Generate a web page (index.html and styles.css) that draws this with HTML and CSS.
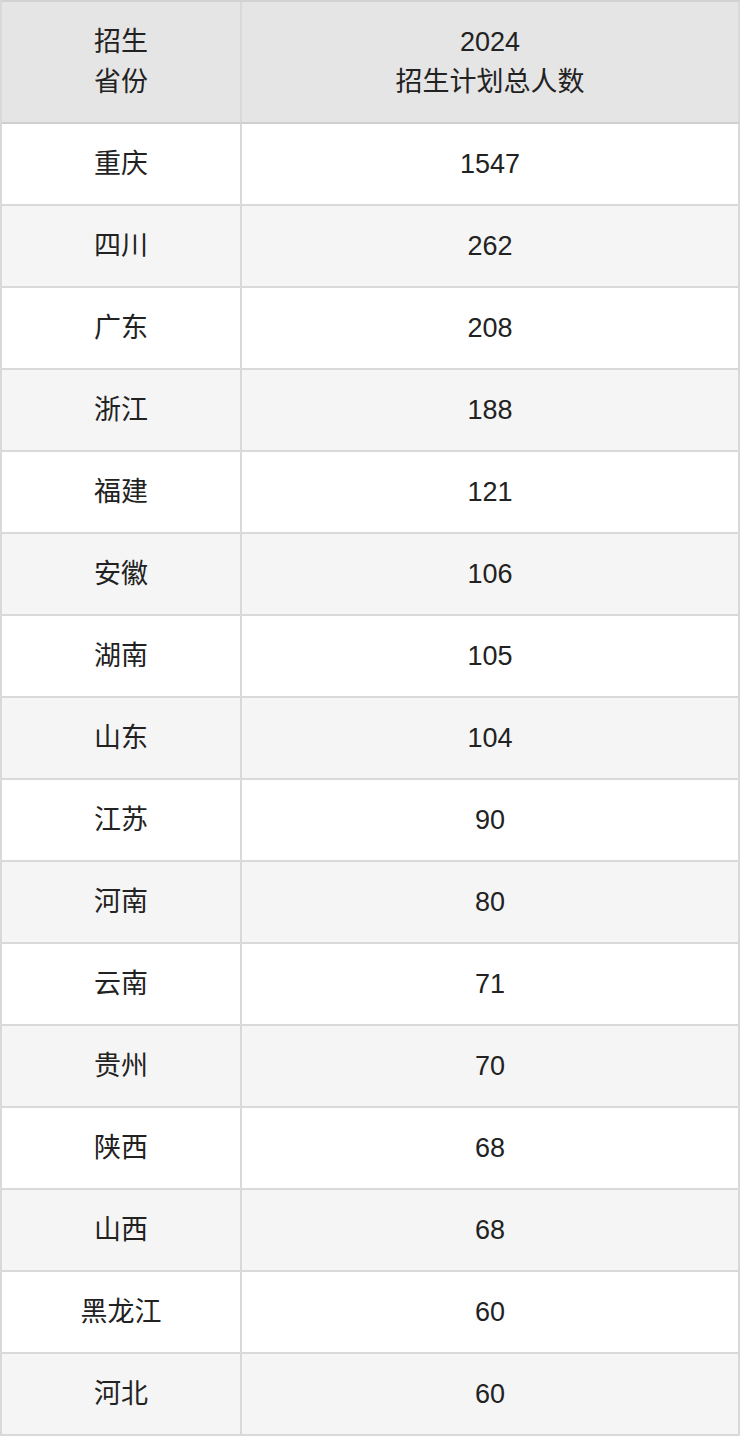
FILE: index.html
```html
<!DOCTYPE html>
<html lang="zh-CN">
<head>
<meta charset="utf-8">
<title>2024招生计划</title>
<link rel="stylesheet" href="styles.css">
</head>
<body>
<table class="plan">
  <thead>
    <tr>
      <th class="c-prov">招生<br>省份</th>
      <th class="c-num">2024<br>招生计划总人数</th>
    </tr>
  </thead>
  <tbody>
    <tr><td>重庆</td><td>1547</td></tr>
    <tr><td>四川</td><td>262</td></tr>
    <tr><td>广东</td><td>208</td></tr>
    <tr><td>浙江</td><td>188</td></tr>
    <tr><td>福建</td><td>121</td></tr>
    <tr><td>安徽</td><td>106</td></tr>
    <tr><td>湖南</td><td>105</td></tr>
    <tr><td>山东</td><td>104</td></tr>
    <tr><td>江苏</td><td>90</td></tr>
    <tr><td>河南</td><td>80</td></tr>
    <tr><td>云南</td><td>71</td></tr>
    <tr><td>贵州</td><td>70</td></tr>
    <tr><td>陕西</td><td>68</td></tr>
    <tr><td>山西</td><td>68</td></tr>
    <tr><td>黑龙江</td><td>60</td></tr>
    <tr><td>河北</td><td>60</td></tr>
  </tbody>
</table>
</body>
</html>
```
FILE: styles.css
```css
html, body {
  margin: 0;
  padding: 0;
  background: #ffffff;
}

.plan {
  border-collapse: separate;
  border-spacing: 0;
  width: 740px;
  border-top: 2px solid #d2d2d2;
  border-left: 2px solid #d9d9d9;
  font-family: "Liberation Sans", "Noto Sans CJK SC", sans-serif;
  font-size: 27px;
  color: #222222;
  table-layout: fixed;
}

.plan th,
.plan td {
  padding: 0;
  text-align: center;
  vertical-align: middle;
  border-right: 2px solid #d9d9d9;
  border-bottom: 2px solid #d9d9d9;
  font-weight: normal;
}

.plan th {
  height: 120px;
  line-height: 40px;
  background: #e5e5e5;
  border-bottom-color: #cfcfcf;
}

.plan .c-prov {
  width: 238px;
}

.plan td {
  height: 80px;
  line-height: 40px;
}

.plan tbody tr:nth-child(odd) td {
  background: #ffffff;
}

.plan tbody tr:nth-child(even) td {
  background: #f5f5f5;
}
```
